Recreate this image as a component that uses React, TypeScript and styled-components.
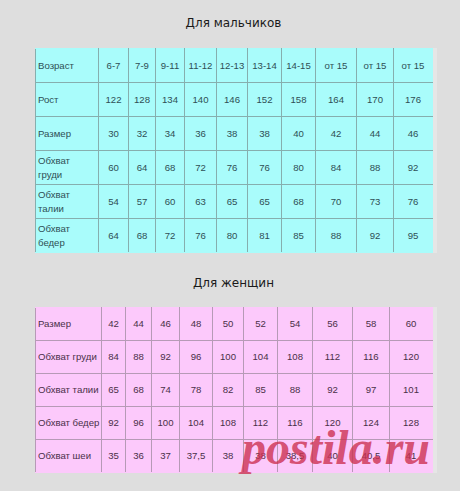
import React from "react";
import styled, { createGlobalStyle } from "styled-components";

const Global = createGlobalStyle`
  html, body { margin: 0; padding: 0; background: #dedede; }
  body { font-family: "Liberation Sans", Arial, sans-serif; }
`;

const Page = styled.div`
  position: relative;
  width: 460px;
  height: 491px;
  padding: 15px 0 0 35px;
  box-sizing: border-box;
  overflow: hidden;
`;

const Title = styled.div<{ $top: number; $bottom: number }>`
  width: 397px;
  text-align: center;
  font-family: "DejaVu Sans", Verdana, sans-serif;
  font-size: 12px;
  line-height: 16px;
  color: #1a1a1a;
  margin-top: ${(p) => p.$top}px;
  margin-bottom: ${(p) => p.$bottom}px;
`;

const Table = styled.table<{ $bg: string; $line: string; $text: string; $rowH: number }>`
  border-collapse: collapse;
  table-layout: fixed;
  width: 397px;
  background: ${(p) => p.$bg};
  border-left: 1px solid ${(p) => p.$line};
  box-shadow: 4px 0 0 rgba(255, 255, 255, 0.25);
  td {
    border: 1px solid ${(p) => p.$line};
    height: ${(p) => p.$rowH}px;
    padding: 0;
    font-size: 9.6px;
    line-height: 14px;
    color: ${(p) => p.$text};
    text-align: center;
    vertical-align: middle;
    white-space: nowrap;
    overflow: hidden;
  }
  td:first-child {
    text-align: left;
    padding-left: 2px;
  }
  tr:first-child td { border-top-color: ${(p) => p.$bg}; }
  td:last-child { border-right-color: ${(p) => p.$bg}; }
  tr:last-child td { border-bottom-color: ${(p) => p.$bg}; }
`;

const Watermark = styled.div`
  position: absolute;
  left: 242px;
  top: 419px;
  font-family: "Liberation Serif", "Times New Roman", serif;
  font-weight: bold;
  font-style: italic;
  font-size: 48px;
  line-height: 58px;
  color: rgba(204, 48, 80, 0.8);
  pointer-events: none;
`;

const boyCols = [63, 30, 27, 29, 32, 31, 34, 34, 41, 37, 39];
const girlCols = [66, 24, 26, 28, 33, 31, 34, 35, 40, 37, 43];

const boys: React.ReactNode[][] = [
  ["Возраст", "6-7", "7-9", "9-11", "11-12", "12-13", "13-14", "14-15", "от 15", "от 15", "от 15"],
  ["Рост", "122", "128", "134", "140", "146", "152", "158", "164", "170", "176"],
  ["Размер", "30", "32", "34", "36", "38", "38", "40", "42", "44", "46"],
  [<>Обхват<br />груди</>, "60", "64", "68", "72", "76", "76", "80", "84", "88", "92"],
  [<>Обхват<br />талии</>, "54", "57", "60", "63", "65", "65", "68", "70", "73", "76"],
  [<>Обхват<br />бедер</>, "64", "68", "72", "76", "80", "81", "85", "88", "92", "95"],
];

const girls: React.ReactNode[][] = [
  ["Размер", "42", "44", "46", "48", "50", "52", "54", "56", "58", "60"],
  ["Обхват груди", "84", "88", "92", "96", "100", "104", "108", "112", "116", "120"],
  ["Обхват талии", "65", "68", "74", "78", "82", "85", "88", "92", "97", "101"],
  ["Обхват бедер", "92", "96", "100", "104", "108", "112", "116", "120", "124", "128"],
  ["Обхват шеи", "35", "36", "37", "37,5", "38", "38", "38,5", "40", "40,5", "41"],
];

function SizeTable(props: {
  cols: number[];
  rows: React.ReactNode[][];
  bg: string;
  line: string;
  text: string;
  rowH: number;
}) {
  return (
    <Table $bg={props.bg} $line={props.line} $text={props.text} $rowH={props.rowH}>
      <colgroup>
        {props.cols.map((w, i) => (
          <col key={i} style={{ width: w }} />
        ))}
      </colgroup>
      <tbody>
        {props.rows.map((r, i) => (
          <tr key={i}>
            {r.map((c, j) => (
              <td key={j}>{c}</td>
            ))}
          </tr>
        ))}
      </tbody>
    </Table>
  );
}

export default function App() {
  return (
    <>
      <Global />
      <Page>
        <Title $top={0} $bottom={17}>Для мальчиков</Title>
        <SizeTable cols={boyCols} rows={boys} bg="#a9fcfb" line="#86aeae" text="#2f4f55" rowH={33} />
        <Title $top={22} $bottom={16}>Для женщин</Title>
        <SizeTable cols={girlCols} rows={girls} bg="#fcc9fb" line="#b69ab6" text="#4a3048" rowH={32} />
        <Watermark>postila.ru</Watermark>
      </Page>
    </>
  );
}
